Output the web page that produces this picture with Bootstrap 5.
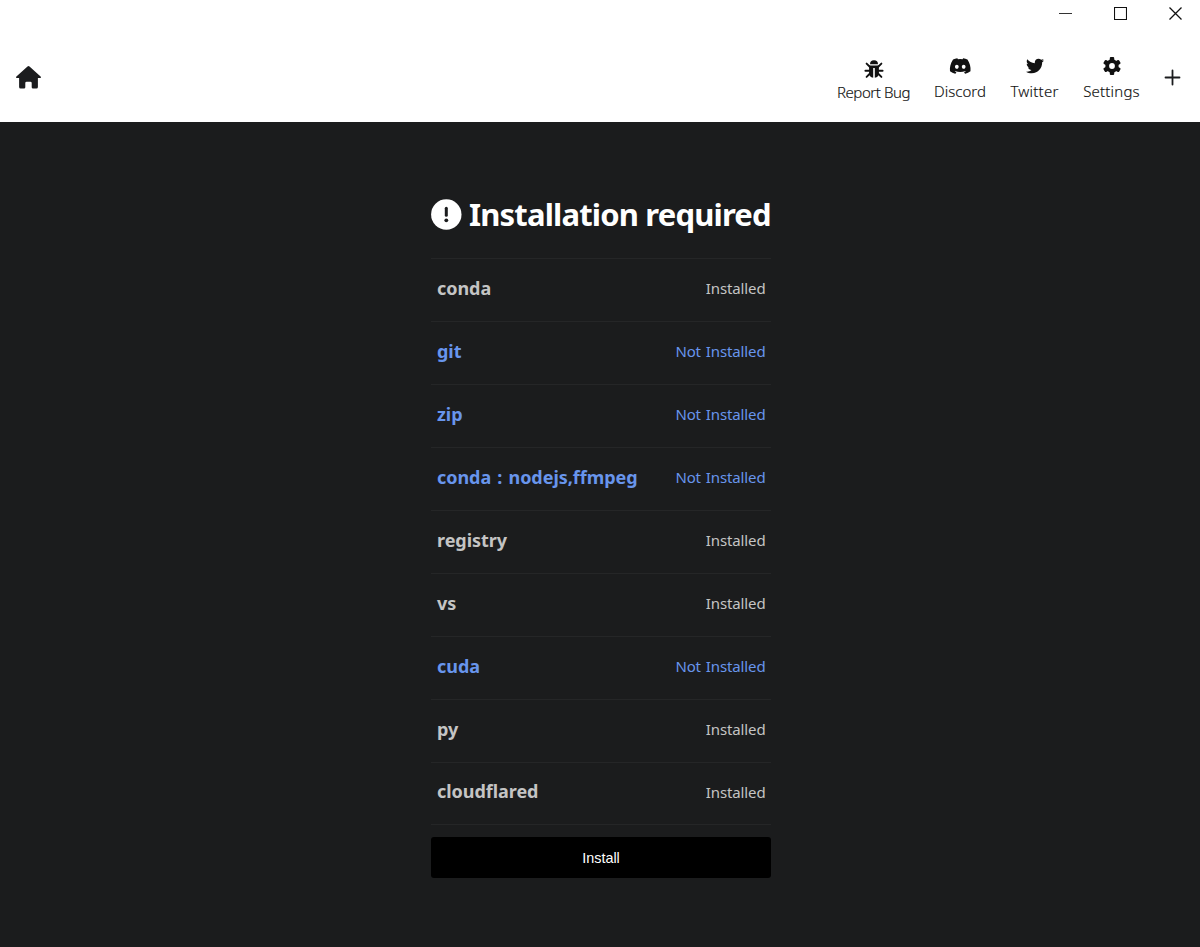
<!DOCTYPE html>
<html lang="en">
<head>
<meta charset="utf-8">
<meta name="viewport" content="width=device-width, initial-scale=1">
<title>Installation required</title>
<link href="https://cdn.jsdelivr.net/npm/bootstrap@5.3.0/dist/css/bootstrap.min.css" rel="stylesheet">
<style>
body{font-family:"Noto Sans",sans-serif;background:#1b1c1d;color:#fff}
svg{display:block;flex:none}
.topbar{height:122px;background:#fff;color:#1b1c1e}
.window-controls{height:27px;padding-right:18px;gap:42px}
.toolbar{height:95px;padding:5px 19px 0 16px}
.tool{color:#111;font-size:15px;font-weight:300;line-height:20px;white-space:nowrap;gap:5px}
.tool span{display:block;-webkit-text-stroke:.15px #111}
.tool svg{height:20px}
.bug{width:73px;padding-top:6px;gap:3px}.bug span{letter-spacing:-.42px}
.twitter span{letter-spacing:.2px}.settings span{letter-spacing:.2px}
.discord,.twitter,.settings{padding-top:2px}
.discord{width:52px}.twitter{width:49px}.settings{width:57px}
.installer{width:342px;padding:71px 0 0 2px}
.installer h1{font-size:31px;font-weight:700;line-height:43px;letter-spacing:-.83px;gap:7px;margin-bottom:22px;white-space:nowrap}
.requirement{height:62.95px;padding:0 5.5px 3px 6px;border-top:1px solid #252627;color:#c4c4c4;font-size:15px}
.requirement:last-child{border-bottom:1px solid #252627;height:63.9px}
.requirement strong{font-size:18px;letter-spacing:-.04px;word-spacing:1.5px}
.requirement span{letter-spacing:-.13px;word-spacing:1.2px}
.missing{color:#6895ec}
.install{height:41px;margin-top:12px;background:#000;color:#fff;border:0;border-radius:3px;font:14.4px "Liberation Sans",sans-serif}
</style>
</head>
<body>
<header class="topbar">
  <div class="window-controls d-flex justify-content-end align-items-center">
    <svg width="13" height="13" viewBox="0 0 13 13"><path d="M0 6.5h13" stroke="#333"/></svg>
    <svg width="13" height="13" viewBox="0 0 13 13"><path d="M.5.5h12v12H.5z" fill="none" stroke="#111" stroke-width="1.1"/></svg>
    <svg width="13" height="13" viewBox="0 0 13 13"><path d="M.5.5l12 12m0-12l-12 12" stroke="#111" stroke-width="1.3"/></svg>
  </div>
  <nav class="toolbar d-flex align-items-center justify-content-between">
    <a href="#" class="text-reset" aria-label="Home"><svg width="25" height="23" viewBox="0 0 25 23" fill="currentColor"><path d="M11.5.5q1-.8 2 0L24.6 10.6q.6.7.2 1.2-.2.3-.9.3h-2v9q0 1.5-1.5 1.5H17q-1.3 0-1.3-1.3V17q0-1.3-1.3-1.3h-3.8q-1.3 0-1.3 1.3v4.3q0 1.3-1.3 1.3H4.6q-1.5 0-1.5-1.5v-9h-2q-.7 0-.9-.3-.4-.5.2-1.2z"/></svg></a>
    <div class="d-flex align-items-center gap-4">
      <a href="#" class="tool bug d-flex flex-column align-items-center text-decoration-none">
        <svg width="20" height="20" viewBox="0 0 20 20"><path d="M6 5.2a4 4 0 0 1 8 0z" fill="currentColor"/><path d="M5.1 6.6h9.8V14q0 4.3-4.1 4.7V9H9.2v9.7Q5.1 18.3 5.1 14z" fill="currentColor"/><path d="M5.8 7.7 2.6 4.6M5.5 11.7H1.4M6 14.5l-3.4 3.4M14.2 7.7l3.2-3.1M14.5 11.7h4.1M14 14.5l3.4 3.4" fill="none" stroke="currentColor" stroke-width="1.9" stroke-linecap="round"/></svg>
        <span>Report Bug</span></a>
      <a href="#" class="tool discord d-flex flex-column align-items-center text-decoration-none">
        <svg width="22.5" height="18" viewBox="0 0 640 512" fill="currentColor"><path d="M524.531,69.836a1.5,1.5,0,0,0-.764-.7A485.065,485.065,0,0,0,404.081,32.03a1.816,1.816,0,0,0-1.923.91,337.461,337.461,0,0,0-14.9,30.6,447.848,447.848,0,0,0-134.426,0,309.541,309.541,0,0,0-15.135-30.6,1.89,1.89,0,0,0-1.924-.91A483.689,483.689,0,0,0,116.085,69.137a1.712,1.712,0,0,0-.788.676C39.068,183.651,18.186,294.69,28.43,404.354a2.016,2.016,0,0,0,.765,1.375A487.666,487.666,0,0,0,176.02,479.918a1.9,1.9,0,0,0,2.063-.676A348.2,348.2,0,0,0,208.12,430.4a1.86,1.86,0,0,0-1.019-2.588,321.173,321.173,0,0,1-45.868-21.853,1.885,1.885,0,0,1-.185-3.126c3.082-2.309,6.166-4.711,9.109-7.137a1.819,1.819,0,0,1,1.9-.256c96.229,43.917,200.41,43.917,295.5,0a1.812,1.812,0,0,1,1.924.233c2.944,2.426,6.027,4.851,9.132,7.16a1.884,1.884,0,0,1-.162,3.126,301.407,301.407,0,0,1-45.89,21.83,1.875,1.875,0,0,0-1,2.611,391.055,391.055,0,0,0,30.014,48.815,1.864,1.864,0,0,0,2.063.7A486.048,486.048,0,0,0,610.7,405.729a1.882,1.882,0,0,0,.765-1.352C623.729,277.594,590.933,167.465,524.531,69.836ZM222.491,337.58c-28.972,0-52.844-26.587-52.844-59.239S193.056,219.1,222.491,219.1c29.665,0,53.306,26.82,52.843,59.239C275.334,310.993,251.924,337.58,222.491,337.58Zm195.38,0c-28.971,0-52.843-26.587-52.843-59.239S388.437,219.1,417.871,219.1c29.667,0,53.307,26.82,52.844,59.239C470.715,310.993,447.538,337.58,417.871,337.58Z"/></svg>
        <span>Discord</span></a>
      <a href="#" class="tool twitter d-flex flex-column align-items-center text-decoration-none">
        <svg width="18" height="18" viewBox="0 0 512 512" fill="currentColor"><path d="M459.37 151.716c.325 4.548.325 9.097.325 13.645 0 138.72-105.583 298.558-298.558 298.558-59.452 0-114.68-17.219-161.137-47.106 8.447.974 16.568 1.299 25.34 1.299 49.055 0 94.213-16.568 130.274-44.832-46.132-.975-84.792-31.188-98.112-72.772 6.498.974 12.995 1.624 19.818 1.624 9.421 0 18.843-1.3 27.614-3.573-48.081-9.747-84.143-51.98-84.143-102.985v-1.299c13.969 7.797 30.214 12.67 47.431 13.319-28.264-18.843-46.781-51.005-46.781-87.391 0-19.492 5.197-37.36 14.294-52.954 51.655 63.675 129.3 105.258 216.365 109.807-1.624-7.797-2.599-15.918-2.599-24.04 0-57.828 46.782-104.934 104.934-104.934 30.213 0 57.502 12.67 76.67 33.137 23.715-4.548 46.456-13.32 66.599-25.34-7.798 24.366-24.366 44.833-46.132 57.827 21.117-2.273 41.584-8.122 60.426-16.243-14.292 20.791-32.161 39.308-52.628 54.253z"/></svg>
        <span>Twitter</span></a>
      <a href="#" class="tool settings d-flex flex-column align-items-center text-decoration-none">
        <svg width="20" height="20" viewBox="-10 -10 20 20"><g fill="currentColor"><rect id="tooth" x="-2.2" y="-9" width="4.4" height="18" rx="1"/><use href="#tooth" transform="rotate(60)"/><use href="#tooth" transform="rotate(120)"/><circle r="6.7"/></g><circle r="2.9" fill="#fff"/></svg>
        <span>Settings</span></a>
      <a href="#" class="text-reset" aria-label="Add"><svg width="17" height="17" viewBox="0 0 17 17"><path d="M8.5 1.5v14M1.5 8.5h14" stroke="currentColor" stroke-width="1.8" stroke-linecap="round"/></svg></a>
    </div>
  </nav>
</header>
<main class="installer mx-auto">
  <h1 class="d-flex align-items-center"><svg width="31" height="31" viewBox="0 0 31 31"><circle cx="15.3" cy="15.5" r="15.2" fill="#fff"/><path d="M15.3 9.2v7.1" stroke="#1b1c1d" stroke-width="3" stroke-linecap="round"/><circle cx="15.3" cy="21.3" r="1.9" fill="#1b1c1d"/></svg>Installation required</h1>
  <div>
    <div class="requirement d-flex align-items-center justify-content-between"><strong>conda</strong><span>Installed</span></div>
    <div class="requirement missing d-flex align-items-center justify-content-between"><strong>git</strong><span>Not Installed</span></div>
    <div class="requirement missing d-flex align-items-center justify-content-between"><strong>zip</strong><span>Not Installed</span></div>
    <div class="requirement missing d-flex align-items-center justify-content-between"><strong>conda : nodejs,ffmpeg</strong><span>Not Installed</span></div>
    <div class="requirement d-flex align-items-center justify-content-between"><strong>registry</strong><span>Installed</span></div>
    <div class="requirement d-flex align-items-center justify-content-between"><strong>vs</strong><span>Installed</span></div>
    <div class="requirement missing d-flex align-items-center justify-content-between"><strong>cuda</strong><span>Not Installed</span></div>
    <div class="requirement d-flex align-items-center justify-content-between"><strong>py</strong><span>Installed</span></div>
    <div class="requirement d-flex align-items-center justify-content-between"><strong>cloudflared</strong><span>Installed</span></div>
  </div>
  <button class="install btn w-100 p-0" type="button">Install</button>
</main>
<script src="https://cdn.jsdelivr.net/npm/bootstrap@5.3.0/dist/js/bootstrap.bundle.min.js"></script>
</body>
</html>
